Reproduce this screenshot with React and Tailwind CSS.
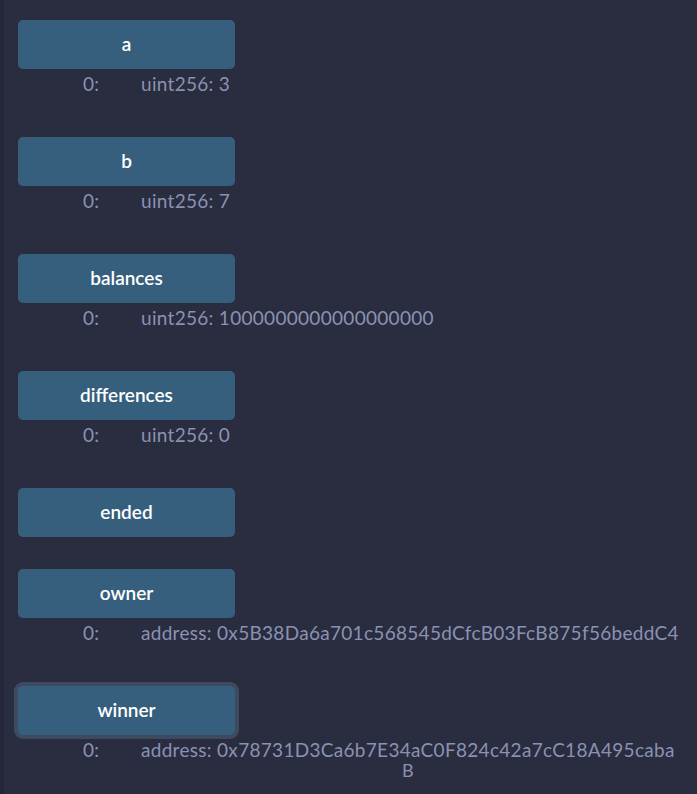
export default function App() {
  const items = [
    { name: "a", out: "uint256: 3" },
    { name: "b", out: "uint256: 7" },
    { name: "balances", out: "uint256: 1000000000000000000" },
    { name: "differences", out: "uint256: 0" },
    { name: "ended", out: null },
    { name: "owner", out: "address: 0x5B38Da6a701c568545dCfcB03FcB875f56beddC4" },
    { name: "winner", out: "winner", focused: true },
  ];
  return (
    <div
      className="min-h-[794px] w-[697px] bg-[#2a2c3f] border-l-4 border-[#24263a] pl-[14px] pt-[20px] overflow-hidden"
      style={{ fontFamily: "Lato, 'Open Sans', sans-serif" }}
    >
      {items.map((it) => (
        <div key={it.name} className="mb-[32px]">
          <button
            className={
              "w-[217px] h-[49px] rounded-[5px] bg-[#365f7e] text-white text-[19px] font-semibold flex items-center justify-center " +
              (it.focused ? "ring-4 ring-[#3d4a5f]" : "")
            }
          >
            {it.name}
          </button>
          {it.out && (
            <div className="flex items-start pt-[5px] pb-[11px] text-[19px] tracking-[0.3px] leading-[20px] text-[#8a92b2]">
              <span className="w-[58px] pl-[65px] box-content shrink-0">0:</span>
              {it.out === "winner" ? (
                <span className="inline-block text-center">
                  <span className="block">address: 0x78731D3Ca6b7E34aC0F824c42a7cC18A495caba</span>
                  <span className="block text-[18px] leading-[19px] pt-[1px]">B</span>
                </span>
              ) : (
                <span>{it.out}</span>
              )}
            </div>
          )}
        </div>
      ))}
    </div>
  );
}
